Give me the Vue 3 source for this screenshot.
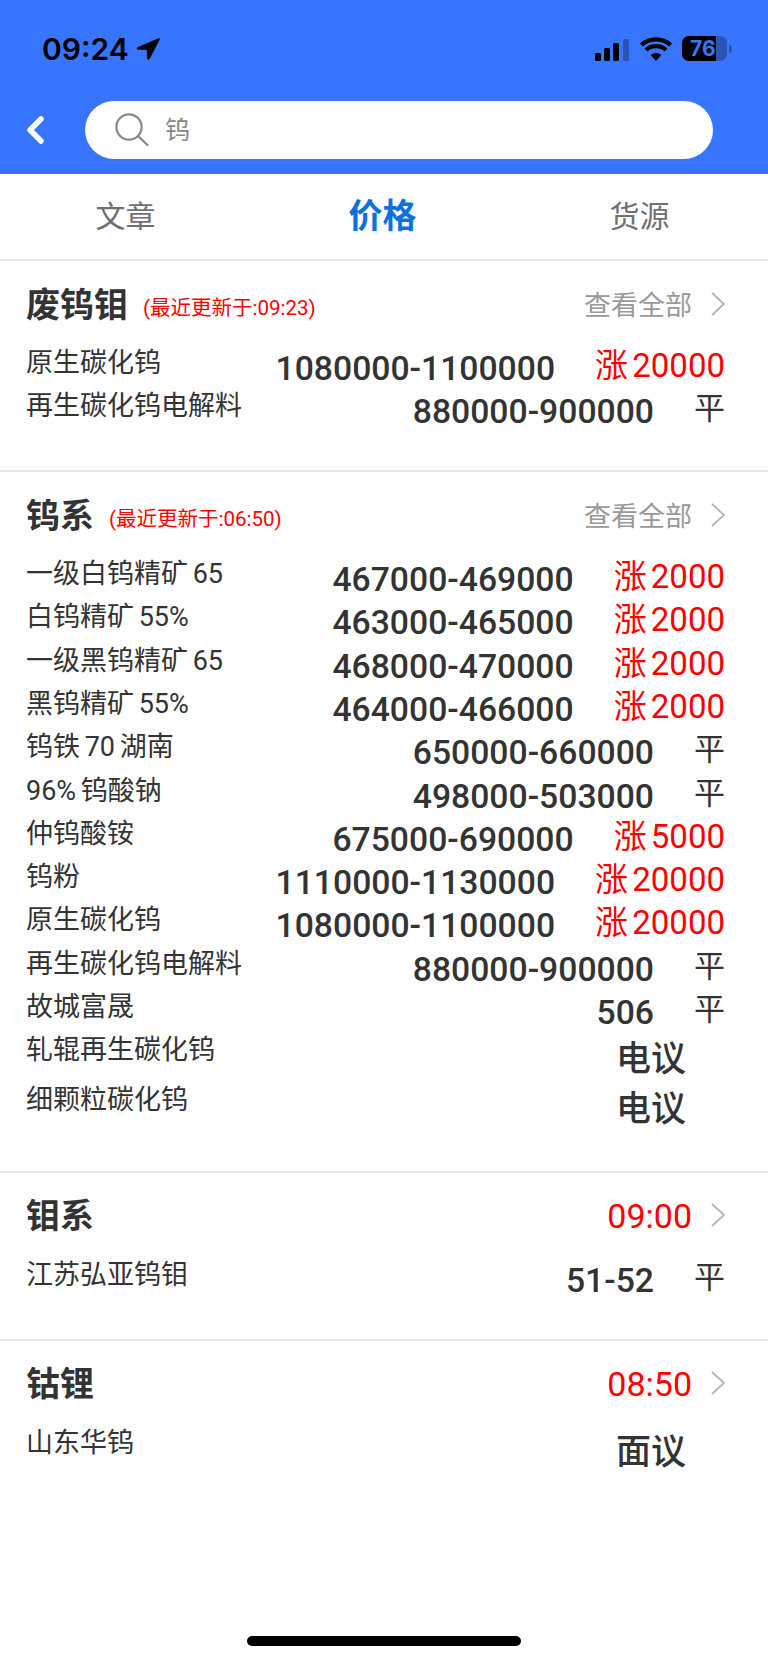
<template>
  <div class="page">
    <header class="top">
      <div class="status">
        <div class="clock">
          <span>09:24</span>
          <svg class="loc" viewBox="0 0 24 24"><path d="M22.6 1.6 1.8 10.6c-.9.4-.7 1.6.4 1.6l9 .2.3 9.2c0 1.1 1.2 1.3 1.7.4L23.4 2.4c.3-.6-.2-1.1-.8-.8z" /></svg>
        </div>
        <div class="indicators">
          <svg class="signal" viewBox="0 0 34 22">
            <rect x="0" y="14" width="6" height="8" rx="1.5" />
            <rect x="9" y="9" width="6" height="13" rx="1.5" />
            <rect x="18" y="4" width="6" height="18" rx="1.5" />
            <rect x="28" y="0" width="6" height="22" rx="1.5" fill="#2b55b5" />
          </svg>
          <svg class="wifi" viewBox="0 0 32 24">
            <path d="M16 24 10.6 18a8 8 0 0 1 10.8 0z" />
            <path d="M7.4 14.6a13 13 0 0 1 17.2 0l2.9-3.2a17.4 17.4 0 0 0-23 0z" />
            <path d="M2.9 9.6a19.6 19.6 0 0 1 26.2 0L32 6.4a24 24 0 0 0-32 0z" />
          </svg>
          <div class="battery">
            <div class="batt-body">
              <div class="batt-fill"></div>
              <span class="batt-num">76</span>
            </div>
            <div class="batt-nub"></div>
          </div>
        </div>
      </div>
      <div class="searchbar">
        <svg class="back" viewBox="0 0 18 28"><path d="M15 3 4 14l11 11" /></svg>
        <div class="search">
          <svg class="lens" viewBox="0 0 34 34"><circle cx="14" cy="14" r="12.6" /><path d="m23.5 23.5 9 8.5" /></svg>
          <span class="keyword">钨</span>
        </div>
      </div>
    </header>

    <nav class="tabs">
      <div v-for="t in tabs" :key="t" class="tab" :class="{ active: t === '价格' }">{{ t }}</div>
    </nav>

    <section v-for="s in sections" :key="s.title" class="group">
      <div class="head">
        <span class="title">{{ s.title }}</span>
        <span v-if="s.note" class="note">(最近更新于:{{ s.note }})</span>
        <span v-if="s.time" class="time">{{ s.time }}</span>
        <span v-else class="all">查看全部</span>
        <svg class="arrow" viewBox="0 0 14 24"><path d="m1 1 12 11L1 23" /></svg>
      </div>
      <div v-for="r in s.rows" :key="r.name" class="row" :class="{ tall: r.talk }">
        <span class="name">{{ r.name }}</span>
        <span v-if="r.talk" class="price talk">{{ r.talk }}</span>
        <template v-else>
          <span class="price">{{ r.price }}</span>
          <span class="change" :class="{ up: r.change !== '平' }">{{ r.change }}</span>
        </template>
      </div>
    </section>

    <div class="home"></div>
  </div>
</template>

<script setup>
const tabs = ['文章', '价格', '货源']

const sections = [
  {
    title: '废钨钼',
    note: '09:23',
    rows: [
      { name: '原生碳化钨', price: '1080000-1100000', change: '涨 20000' },
      { name: '再生碳化钨电解料', price: '880000-900000', change: '平' },
    ],
  },
  {
    title: '钨系',
    note: '06:50',
    rows: [
      { name: '一级白钨精矿 65', price: '467000-469000', change: '涨 2000' },
      { name: '白钨精矿 55%', price: '463000-465000', change: '涨 2000' },
      { name: '一级黑钨精矿 65', price: '468000-470000', change: '涨 2000' },
      { name: '黑钨精矿 55%', price: '464000-466000', change: '涨 2000' },
      { name: '钨铁 70 湖南', price: '650000-660000', change: '平' },
      { name: '96% 钨酸钠', price: '498000-503000', change: '平' },
      { name: '仲钨酸铵', price: '675000-690000', change: '涨 5000' },
      { name: '钨粉', price: '1110000-1130000', change: '涨 20000' },
      { name: '原生碳化钨', price: '1080000-1100000', change: '涨 20000' },
      { name: '再生碳化钨电解料', price: '880000-900000', change: '平' },
      { name: '故城富晟', price: '506', change: '平' },
      { name: '轧辊再生碳化钨', talk: '电议' },
      { name: '细颗粒碳化钨', talk: '电议' },
    ],
  },
  {
    title: '钼系',
    time: '09:00',
    rows: [{ name: '江苏弘亚钨钼', price: '51-52', change: '平' }],
  },
  {
    title: '钴锂',
    time: '08:50',
    rows: [{ name: '山东华钨', talk: '面议' }],
  },
]
</script>

<style>
html,
body {
  margin: 0;
  background: #fff;
}
</style>

<style scoped>
.page {
  position: relative;
  width: 768px;
  height: 1663px;
  overflow: hidden;
  background: #fff;
  font-family: Roboto, "Noto Sans CJK SC", sans-serif;
  color: #333;
}

.top {
  height: 174px;
  background: #3875fe;
  box-sizing: border-box;
  padding-top: 36px;
}

.status {
  height: 25px;
  display: flex;
  justify-content: space-between;
  padding: 0 36px 0 42px;
}

.clock {
  display: flex;
  align-items: center;
  gap: 7px;
  font-family: Inter, sans-serif;
  font-size: 30px;
  font-weight: 600;
  color: #000;
}

.loc {
  width: 24px;
  height: 24px;
  stroke: #000;
  stroke-width: 0.8;
  stroke-linejoin: round;
}

.indicators {
  display: flex;
  align-items: center;
}

.signal {
  width: 34px;
  height: 22px;
  margin-top: 3px;
}

.wifi {
  width: 32px;
  height: 24px;
  margin-left: 11px;
}

.battery {
  display: flex;
  align-items: center;
  margin-left: 10px;
}

.batt-body {
  position: relative;
  width: 45px;
  height: 25px;
  border-radius: 7px;
  overflow: hidden;
  background: #2b55b5;
}

.batt-fill {
  width: 34px;
  height: 25px;
  background: #000;
}

.batt-num {
  position: absolute;
  left: 8px;
  top: 0;
  font-family: Inter, sans-serif;
  font-size: 21px;
  font-weight: 700;
  line-height: 25px;
  color: #3875fe;
}

.batt-nub {
  width: 3px;
  height: 8px;
  margin-left: 2px;
  border-radius: 0 3px 3px 0;
  background: #2b55b5;
}

.searchbar {
  display: flex;
  align-items: center;
  margin-top: 40px;
  padding-left: 26px;
}

.back {
  width: 18px;
  height: 28px;
  fill: none;
  stroke: #fff;
  stroke-width: 5.5;
  stroke-linecap: round;
  stroke-linejoin: round;
}

.search {
  display: flex;
  align-items: center;
  width: 628px;
  height: 58px;
  margin-left: 41px;
  padding-left: 30px;
  box-sizing: border-box;
  border-radius: 29px;
  background: #fff;
}

.lens {
  width: 34px;
  height: 34px;
  fill: none;
  stroke: #888;
  stroke-width: 2.2;
  stroke-linecap: round;
}

.keyword {
  margin: -4px 0 0 16px;
  font-size: 25px;
  color: #888;
}

.tabs {
  display: flex;
  width: 771px;
  height: 87px;
  margin-left: -3px;
  box-sizing: border-box;
  border-bottom: 2px solid #e8e8e8;
}

.tab {
  flex: 1;
  text-align: center;
  font-size: 30px;
  line-height: 85px;
  color: #707070;
}

.tab.active {
  font-size: 34px;
  font-weight: 700;
  color: #0a72e0;
}

.group {
  padding: 17px 43px 36.5px 26px;
  border-bottom: 2px solid #e8e8e8;
}

.group:last-of-type {
  border-bottom: none;
}

.head {
  display: flex;
  align-items: center;
  height: 50px;
  margin-bottom: 19px;
}

.title {
  margin-top: -2px;
  font-size: 34px;
  font-weight: 700;
}

.note {
  margin: 5px 0 0 15px;
  font-size: 20.5px;
  color: #f00;
}

.all,
.time {
  margin-left: auto;
  font-size: 27px;
  color: #999;
}

.time {
  margin-top: 2px;
  font-size: 34px;
  color: #f00;
}

.arrow {
  width: 14px;
  height: 24px;
  margin: 1px 0 0 19px;
  fill: none;
  stroke: #b4b4b4;
  stroke-width: 1.8;
}

.row {
  display: flex;
  height: 43.3px;
  line-height: 43.3px;
}

.row.tall {
  height: 50px;
  line-height: 52px;
}

.name {
  margin-right: auto;
  font-size: 27px;
  line-height: 32px;
  word-spacing: -2px;
}

.price {
  font-size: 33.7px;
  font-weight: 500;
}

.price.talk {
  margin-right: 39px;
  font-size: 35px;
}

.change {
  margin: -3px 0 0 40px;
  font-size: 31px;
}

.change.up {
  font-size: 33px;
  word-spacing: -4px;
  color: #f00;
}

.home {
  position: absolute;
  left: 247px;
  top: 1636px;
  width: 274px;
  height: 10px;
  border-radius: 5px;
  background: #000;
}
</style>
